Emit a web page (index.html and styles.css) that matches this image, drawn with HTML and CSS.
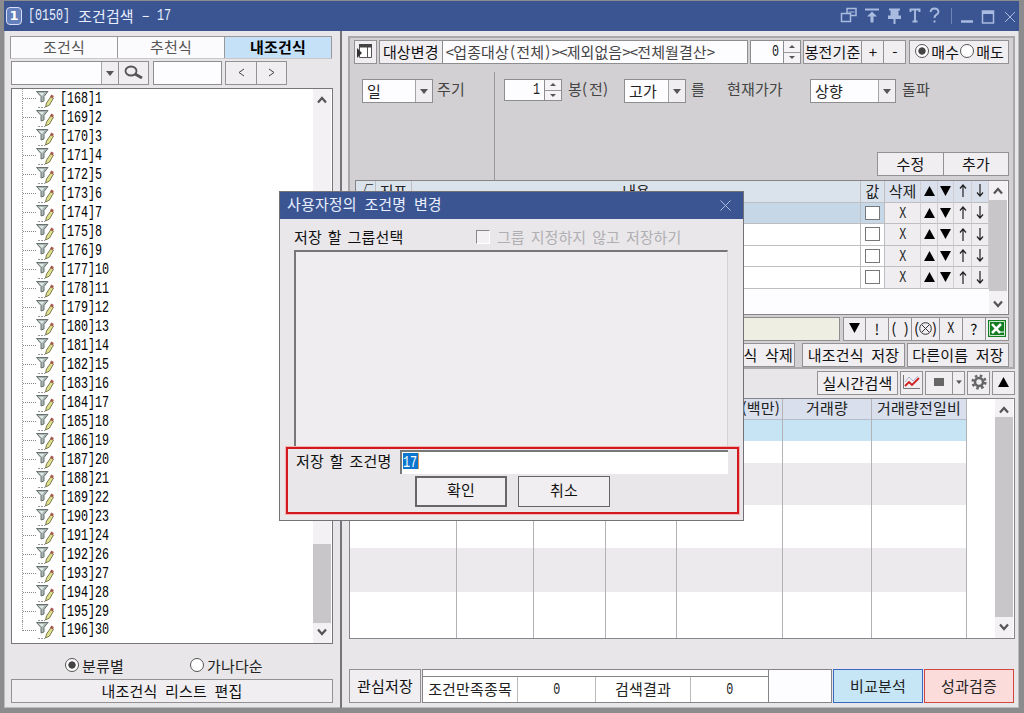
FILE: index.html
```html
<!DOCTYPE html>
<html lang="ko">
<head>
<meta charset="utf-8">
<title>[0150] 조건검색</title>
<link rel="stylesheet" href="styles.css">
</head>
<body>
<svg class="defs" width="0" height="0">
  <symbol id="filter" viewBox="0 0 18 18">
    <path d="M0.5 0.5H12L8 5.500V10L5 11V5.500Z" fill="#a9b7b5" stroke="#69706f"/>
    <path d="M3 2h5l-2 3z" fill="#dfeae7"/>
    <path d="M9.5 16l1-4 4.500-6.500 2.500 1.500-4 7z" fill="#e0df8c" stroke="#6d6d45" stroke-width=".9"/>
    <path d="M14 6l1.300-2.500 2.500 1.400-1.200 2.400z" fill="#a5584b"/>
    <path d="M2 16.500H9" stroke="#999" stroke-dasharray="2 1"/>
  </symbol>
  <symbol id="up" viewBox="0 0 10 10"><path d="M1 7.500L5 3l4 4.500" fill="none" stroke="#555" stroke-width="2.200"/></symbol>
  <symbol id="down" viewBox="0 0 10 10"><path d="M1 2.500L5 7l4-4.500" fill="none" stroke="#555" stroke-width="2.200"/></symbol>
  <symbol id="tri" viewBox="0 0 8 5"><path d="M0 0h8L4 5z" fill="#555"/></symbol>
  <symbol id="bup" viewBox="0 0 12 11"><path d="M6 0l6 11H0z" fill="#000"/></symbol>
  <symbol id="bdown" viewBox="0 0 12 11"><path d="M6 11L12 0H0z" fill="#000"/></symbol>
  <symbol id="aup" viewBox="0 0 8 13"><path d="M4 1v12M1 4.500L4 1l3 3.500" fill="none" stroke="#222" stroke-width="1.200"/></symbol>
  <symbol id="adown" viewBox="0 0 8 13"><path d="M4 0v12M1 8.500L4 12l3-3.500" fill="none" stroke="#222" stroke-width="1.200"/></symbol>
</svg>

<div class="window">
  <header class="titlebar">
    <span class="badge">1</span>
    <span class="title"><span class="n w6">[0150]</span> 조건검색 <span class="dash">-</span> <span class="n w2">17</span></span>
    <svg class="wtools" width="176" height="20" viewBox="0 0 176 20" fill="none" stroke="#a9bbdf" stroke-width="1.500">
      <path d="M7 2.500h9v7H7z"/><path d="M1.500 7.500h9v8h-9z" fill="#3a5592"/><path d="M8.500 6h6" stroke-width="1"/>
      <path d="M25 3.500h14" stroke-width="2"/><path d="M32 5.500l5 5h-3.500v6h-3v-6H27z" fill="#a9bbdf" stroke="none"/>
      <path d="M49 2.500h11v2h-1.500v5h2.500v3.500h-5.500v5h-2v-5H48V9.500h2.500v-5H49z" fill="#a9bbdf" stroke="none"/>
      <path d="M70.500 6V3.500h9V6M75 3.500v12M72.500 15.500h5" stroke-width="1.900"/>
      <path d="M90.500 6q.5-3.500 4-3.500t4 3.200q0 2-2.300 3.200-1.700 1-1.700 3M94.500 14.500v2" stroke-width="1.900"/>
      <path d="M111.500 2v16" stroke="#6f86b8" stroke-width="1"/>
      <path d="M121 15.500h12" stroke-width="2.500"/>
      <path d="M142.500 5h11v12h-11z"/><path d="M142 6.500h12" stroke-width="3"/>
      <path d="M165 6l10 10M175 6l-10 10" stroke-width="1"/>
    </svg>
  </header>

  <div class="body">
    <aside class="side">
      <nav class="tabs"><span>조건식</span><span>추천식</span><span class="on">내조건식</span></nav>
      <div class="find">
        <div class="combo c1"><span></span><i><svg width="8" height="5"><use href="#tri"/></svg></i></div>
        <div class="btn c2"><svg width="19" height="14" viewBox="0 0 19 14" fill="none" stroke="#555"><ellipse cx="7" cy="6" rx="5.500" ry="4.500" stroke-width="1.800"/><path d="M11 9l7 4" stroke-width="2.800"/></svg></div>
        <div class="box c3"></div>
        <div class="btn c4"><svg width="7" height="9"><path d="M6 1L1 4.500 6 8" fill="none" stroke="#444"/></svg></div>
        <div class="btn c5"><svg width="7" height="9"><path d="M1 1l5 3.500L1 8" fill="none" stroke="#444"/></svg></div>
      </div>
      <div class="tree">
        <div class="rows" id="rows"></div>
        <div class="scroll"><svg width="10" height="10"><use href="#up"/></svg><div class="thumb t1"></div><svg width="10" height="10"><use href="#down"/></svg></div>
      </div>
      <div class="sort"><span class="opt o1"><i class="radio sel"></i>분류별</span><span class="opt"><i class="radio"></i>가나다순</span></div>
      <div class="btn edit">내조건식 리스트 편집</div>
    </aside>

    <main class="main">
      <section class="panel">
        <div class="target">
          <div class="btn r1"><svg width="16" height="16" viewBox="0 0 16 16"><path d="M2.500 1.500h12v13h-12zM10.500 4v10" fill="#fff" stroke="#555"/><path d="M2 1h13v3.500H2z" fill="#444"/><path d="M0 5l5 5-5 5z" fill="#333"/></svg></div>
          <div class="btn r2">대상변경</div>
          <div class="box r3"><b>&lt;</b>업종대상<b>(</b>전체<b>)</b><b>&gt;</b><b>&lt;</b>제외없음<b>&gt;</b><b>&lt;</b>전체월결산<b>&gt;</b></div>
          <div class="box r4"><span class="n">0</span></div><div class="spin"><i><svg width="6" height="3"><path d="M0 3h6L3 0z"/></svg></i><i><svg width="6" height="3"><path d="M0 0h6L3 3z"/></svg></i></div>
          <div class="btn r5">봉전기준</div><div class="btn r6">+</div><div class="btn r6">-</div>
          <div class="btn r7"><i class="radio sel"></i>매수<i class="radio"></i>매도</div>
        </div>
        <div class="cond">
          <div class="period"><div class="combo p1"><span>일</span><i><svg width="8" height="5"><use href="#tri"/></svg></i></div><span class="lbl">주기</span></div>
          <div class="rule">
            <div class="line">
              <div class="box q1"><span class="n">1</span></div><div class="spin"><i><svg width="6" height="3"><path d="M0 3h6L3 0z"/></svg></i><i><svg width="6" height="3"><path d="M0 0h6L3 3z"/></svg></i></div>
              <span class="lbl q2">봉<b>(</b>전<b>)</b></span>
              <div class="combo q3"><span>고가</span><i><svg width="8" height="5"><use href="#tri"/></svg></i></div>
              <span class="lbl q4">를</span><span class="lbl q5">현재가가</span>
              <div class="combo q6"><span>상향</span><i><svg width="8" height="5"><use href="#tri"/></svg></i></div>
              <span class="lbl">돌파</span>
            </div>
            <div class="acts"><div class="btn">수정</div><div class="btn">추가</div></div>
          </div>
        </div>
        <div class="indic">
          <div class="grid">
            <div class="gr head"><span>√</span><span>지표</span><span>내용</span><span>값</span><span>삭제</span><span><svg width="11" height="10"><use href="#bup"/></svg></span><span><svg width="11" height="10"><use href="#bdown"/></svg></span><span><svg width="8" height="13"><use href="#aup"/></svg></span><span><svg width="8" height="13"><use href="#adown"/></svg></span></div>
          </div>
          <div class="scroll s2"><svg width="10" height="10"><use href="#up"/></svg><div class="thumb t2"></div><svg width="10" height="10"><use href="#down"/></svg></div>
        </div>
        <div class="formula">
          <div class="box f0"></div>
          <div class="btn f1"><svg width="11" height="10"><use href="#bdown"/></svg></div><div class="btn f2">!</div><div class="btn f2 par">(&nbsp;)</div><div class="btn f3 par">(<svg width="13" height="13" viewBox="0 0 13 13" fill="none" stroke="#333"><circle cx="6.500" cy="6.500" r="5.800"/><path d="M3 3l7 7M10 3l-7 7"/></svg>)</div><div class="btn f2"><span class="n">X</span></div><div class="btn f2">?</div>
          <div class="btn f2"><svg width="18" height="17" viewBox="0 0 18 17"><path d="M0 0h18v17H0z" fill="#137d22"/><path d="M1.500 1.500h15v14h-15z" fill="none" stroke="#cfe8cf"/><path d="M4 4l8 9M13 4l-9 9" stroke="#fff" stroke-width="2.500"/><path d="M12 12h4" stroke="#fff"/></svg></div>
        </div>
        <div class="saves"><div class="btn v1">내조건식 삭제</div><div class="btn v2">내조건식 저장</div><div class="btn v3">다른이름 저장</div></div>
      </section>

      <div class="live">
        <div class="btn l1">실시간검색</div>
        <div class="btn l2"><svg width="19" height="15" viewBox="0 0 19 15" fill="none"><path d="M1.500 0v13.500H18" stroke="#777"/><path d="M3 7l4-5 4 4 5-5" stroke="#aab6d0"/><path d="M3 11l4-4 3 3 7-7" stroke="#d02020" stroke-width="1.800"/></svg></div>
        <div class="btn l3"><u class="sq"></u></div><div class="btn l4"><svg width="6" height="4" viewBox="0 0 8 5"><use href="#tri"/></svg></div>
        <div class="btn l2 g2"><svg width="16" height="16" viewBox="0 0 16 16" fill="none" stroke="#666"><circle cx="8" cy="8" r="6.300" stroke-width="2.600" stroke-dasharray="2.500 2.450"/><circle cx="8" cy="8" r="4" stroke-width="2.600"/></svg></div>
        <div class="btn l2 g2"><svg width="11" height="10"><use href="#bup"/></svg></div>
      </div>

      <div class="result">
        <div class="cols">
          <div><span></span></div><div><span></span></div><div><span></span></div><div><span></span></div><div><span class="amt">거래대금(백만)</span></div><div><span>거래량</span></div><div><span>거래량전일비</span></div>
        </div>
        <div class="scroll s3"><svg width="10" height="10"><use href="#up"/></svg><div class="thumb t3"></div><svg width="10" height="10"><use href="#down"/></svg></div>
      </div>

      <footer class="foot">
        <div class="btn k1">관심저장</div>
        <div class="stat"><div class="strip"></div><div class="cells"><span>조건만족종목</span><span><b class="n">0</b></span><span>검색결과</span><span><b class="n">0</b></span></div></div>
        <div class="blank"></div>
        <div class="big blue">비교분석</div><div class="big red">성과검증</div>
      </footer>
    </main>
  </div>

  <div class="dialog">
    <div class="dtitle"><span>사용자정의 조건명 변경</span><svg width="11" height="11"><path d="M.5.5l10 10M10.500.5l-10 10" stroke="#a9bbdf"/></svg></div>
    <div class="dbody">
      <div class="drow"><span>저장 할 그룹선택</span><span class="nogrp"><i></i>그룹 지정하지 않고 저장하기</span></div>
      <div class="dlist"></div>
      <div class="named">
        <div class="nrow"><span>저장 할 조건명</span><div class="ninput"><mark><span class="n">17</span></mark></div></div>
        <div class="nbtns"><div class="btn ok">확인</div><div class="btn">취소</div></div>
      </div>
    </div>
  </div>
</div>
<script src="app.js"></script>
</body>
</html>
```
FILE: styles.css
```css
* { box-sizing: border-box; }
body { margin: 0; font: 15px/1 "Noto Sans CJK KR", sans-serif; letter-spacing: .15px; word-spacing: 3.3px; color: #222; }
i, b { font-style: normal; font-weight: 400; }
svg { display: block; flex: none; }
.defs { position: absolute; }
.window { position: relative; width: 1024px; height: 713px; background: #e8e6e9; border: solid #8c8b8e; border-width: 1px 5px 5px 4px; box-shadow: inset 1px 0 #bbb, inset -1px -1px #bbb; overflow: hidden; display: flex; flex-direction: column; }
.n { font: 16px/1 "Liberation Mono", monospace; letter-spacing: 0; word-spacing: 0; display: inline-block; transform: scaleX(.73); transform-origin: left; white-space: pre; }

.titlebar { height: 30px; flex: none; margin: 0 -4px; padding: 0 7px 0 6px; background: #3a5592; color: #e9efff; display: flex; align-items: center; }
.badge { width: 16px; height: 18px; border: 1px solid #d5def2; border-radius: 4px; background: #6580bb; color: #fff; font: bold 13px/16px "DejaVu Sans", sans-serif; text-align: center; letter-spacing: 0; }
.title { margin-left: 6px; padding-bottom: 2px; white-space: nowrap; display: flex; align-items: center; }
.title .n { padding-top: 2px; }
.w6 { width: 50px; } .w2 { width: 14px; margin-left: 9px; }
.dash { margin-left: 9px; transform: scaleX(1.6); }
.wtools { margin-left: auto; }

.body { flex: 1; display: flex; min-height: 0; }
.side { width: 338px; padding: 5px 8px 0 6px; border-right: 2px solid #77757a; flex: none; }
.tabs { display: flex; height: 23px; border: 1px solid #99989b; border-bottom-color: #c8c8ca; background: #fbfafc; }
.tabs span { flex: 1; display: flex; align-items: center; justify-content: center; border-right: 1px solid #99989b; color: #555; padding-bottom: 3px; }
.tabs .on { background: #c4e1f8; border: 0; font-weight: bold; color: #000; }
.box { background: #fdfcfe; border: 1px solid #8e8d90; display: flex; align-items: center; }
.btn { background: #f0eef1; border: 1px solid #929194; display: flex; align-items: center; justify-content: center; white-space: nowrap; color: #111; padding-bottom: 2px; }
.combo { display: flex; background: #fdfcfe; border: 1px solid #8e8d90; }
.combo span { flex: 1; padding: 3px 0 0 4px; white-space: nowrap; }
.combo i { width: 17px; background: #f0eef1; border-left: 1px solid #a5a4a7; display: flex; align-items: center; justify-content: center; }
.find { display: flex; height: 24px; margin: 2px 0 0 1px; }
.c1 { width: 108px; } .c2 { width: 31px; margin-left: -1px; } .c3 { width: 69px; margin: 0 3px 0 4px; } .c4 { width: 32px; } .c5 { width: 31px; margin-left: -1px; }
.tree { margin: 3px -1px 0 1px; height: 556px; background: #fff; border: 1px solid #77767a; display: flex; overflow: hidden; }
.rows { flex: 1; padding-left: 10px; }
.row { height: 19px; display: flex; align-items: center; border-left: 1px dotted #999; }
.row:last-child { height: 10px; }
.row:last-child > * { position: relative; top: 4px; }
.row u { width: 13px; border-top: 1px dotted #888; flex: none; }
.row svg { margin: 2px 6px 0 0; }
.row .n { width: 90px; color: #000; }
.scroll { width: 18px; margin-right: 1px; background: #f3f1f4; display: flex; flex-direction: column; align-items: center; padding: 6px 0; flex: none; }
.thumb { width: 100%; background: #c8c6c9; }
.t1 { height: 79px; margin: auto 0 4px; }
.sort { display: flex; height: 35px; padding: 7px 0 0 55px; align-items: center; }
.opt { display: flex; align-items: center; width: 125px; }
.radio { width: 14px; height: 14px; border: 1px solid #555; border-radius: 50%; background: #fff; margin-right: 3px; flex: none; }
.sel { background: radial-gradient(circle, #444 0 3.300px, #fff 4px); }
.edit { height: 24px; margin: 0 -1px 0 1px; }

.main { flex: 1; min-width: 0; padding: 5px 4px 0 6px; }
.panel { height: 333px; border: 2px solid #a9a8ab; background: #d2d0d2; padding: 2px 4px 0 4px; }
.target { display: flex; height: 24px; }
.r1 { width: 23px; margin-right: 2px; } .r2 { width: 64px; } .r3 { width: 307px; margin-left: -1px; padding: 0 0 2px 3px; color: #444; letter-spacing: .1px; white-space: nowrap; }
.r3 b { width: 7.500px; letter-spacing: 0; text-align: center; }
.r4 { width: 34px; margin-left: 2px; justify-content: flex-end; }
.r4 .n, .q1 .n { margin-right: 1px; }
.spin { width: 18px; margin-left: -1px; border: 1px solid #8e8d90; display: flex; flex-direction: column; background: #f5f3f6; }
.spin i { flex: 1; display: flex; align-items: center; justify-content: center; }
.spin i:first-child { border-bottom: 1px solid #999; }
.spin path { fill: #555; }
.r5 { width: 60px; margin-left: 2px; } .r6 { width: 23px; margin-left: -1px; } .r7 { width: 100px; margin-left: 3px; }
.r7 .radio { margin: 0 2px 0 1px; }
.cond { display: flex; height: 116px; }
.period { width: 141px; margin-top: 8px; padding: 7px 0 0 8px; display: flex; border-right: 1px solid #99989b; }
.combo { height: 24px; }
.p1 { width: 71px; }
.lbl { color: #444; padding-top: 2px; white-space: nowrap; }
.period .lbl { margin-left: 4px; }
.rule { flex: 1; display: flex; flex-direction: column; justify-content: space-between; padding: 15px 0 4px 9px; min-width: 0; }
.line { display: flex; }
.q1 { width: 41px; height: 22px; justify-content: flex-end; } .line .spin { height: 22px; }
.q2 { width: 61px; padding-left: 6px; margin-right: 1px; } .q2 b { display: inline-block; width: 7px; }
.q3 { width: 62px; } .q4 { width: 36px; margin-left: 5px; } .q5 { width: 83px; } .q6 { width: 86px; margin-right: 6px; }
.line > .lbl, .line > .combo, .line > .box, .line > .spin { flex: none; }
.acts { display: flex; justify-content: flex-end; }
.acts .btn { width: 66px; height: 24px; margin-left: -1px; } .acts .btn:first-child { width: 67px; }
.indic { height: 135px; background: #fdfcfe; border: 1px solid #858488; display: flex; margin-left: 1px; }
.grid { flex: 1; }
.gr { display: grid; grid-template-columns: 20px 36px 1fr 24px 36px 17px 16px 18px 17px; height: 21.500px; background: #fff; }
.gr > span { border-right: 1px solid #bebdc0; border-bottom: 1px solid #bebdc0; display: flex; align-items: center; justify-content: center; white-space: nowrap; overflow: hidden; letter-spacing: 0; }
.head > span { background: #dae2eb; padding-bottom: 1px; }
.gr > span:nth-child(n+5) { background: #efedf0; border-right-color: #d0ced2; }
.head > span:nth-child(n+5) { background: #dae1ed; }
.picked > span:nth-child(-n+4) { background: #c6d8e8; }
.check { width: 15px; height: 14px; border: 1px solid #777; background: #fff; }
.s2 { width: 18px; padding: 5px 0; } .t2 { height: 91px; margin: 4px 0 auto; }
.formula { display: flex; height: 24px; margin-top: 2px; }
.f0 { flex: 1; background: #eeefe2; margin: 0 3px 0 1px; } .f1 { width: 23px; } .f2 { width: 24px; margin-left: -1px; } .f3 { width: 29px; margin-left: -1px; }
.f2 .n { transform-origin: center; padding-top: 2px; }
.par { letter-spacing: 0; }
.saves { display: flex; justify-content: flex-end; height: 24px; margin-top: 2px; }
.v1 { width: 103px; margin-right: 7px; justify-content: flex-end; padding-right: 1px; } .v2 { width: 103px; margin-right: 2px; } .v3 { width: 102px; }

.live { display: flex; justify-content: flex-end; height: 24px; margin-top: 2px; }
.l1 { width: 81px; margin-right: 2px; } .l2 { width: 23px; } .l3 { width: 28px; margin-left: 2px; } .l4 { width: 13px; margin-left: -1px; } .g2 { margin-left: 2px; }
.sq { width: 10px; height: 8px; background: #666; }
.result { height: 241px; margin-top: 3px; background: #fff; border: 1px solid #858488; display: flex; justify-content: space-between; margin-left: 1px; }
.cols { width: 617px; display: grid; grid-template-columns: 107px 77px 72px 71px 106px 89px 95px; background: linear-gradient(#d9dfec 0 20px, #b5bdca 20px 21px, #c6e4f4 21px 42px, #fff 42px 64px, #eceaec 64px 106px, #fff 106px 149px, #eceaec 149px 193px, #fff 193px); }
.cols div { border-right: 1px solid #b3b2b5; }
.cols span { display: flex; height: 20px; padding-bottom: 3px; align-items: center; justify-content: center; white-space: nowrap; letter-spacing: .2px; }
.cols .amt { justify-content: flex-end; padding-right: 2px; }
.s3 { width: 18px; } .t3 { height: 200px; margin: auto 0 5px; }
.foot { display: flex; height: 34px; margin-top: 30px; margin-left: 1px; }
.k1 { width: 72px; margin-right: 1px; }
.stat { width: 347px; border: 1px solid #858488; background: #fff; display: flex; flex-direction: column; }
.strip { height: 7px; border-bottom: 1px solid #858488; }
.cells { flex: 1; display: grid; grid-template-columns: 95px 78px 95px 1fr; }
.cells span { display: flex; align-items: center; justify-content: center; border-right: 1px solid #bbb; padding-bottom: 2px; white-space: nowrap; }
.cells span:last-child { border: 0; }
.cells .n, .x { transform-origin: center; padding-top: 2px; }
.blank { width: 63px; border: 1px solid #858488; border-left: 0; background: #fdfcfe; }
.big { width: 90px; margin-left: 1px; display: flex; align-items: center; justify-content: center; border: 1px solid; padding-bottom: 2px; }
.blue { background: #c6e6f6; border-color: #3b68c0; } .red { background: #fcdcda; border-color: #d24840; }

.dialog { position: absolute; left: 275px; top: 190px; width: 465px; height: 330px; background: #e9e7ea; border: 1px solid #737277; display: flex; flex-direction: column; }
.dtitle { height: 27px; background: #3a5592; color: #e9efff; padding: 0 12px 0 7px; display: flex; align-items: center; justify-content: space-between; }
.dtitle span { padding-bottom: 4px; }
.dbody { padding: 0 5px; }
.drow { display: flex; height: 31px; padding: 4px 5px 0 9px; align-items: center; justify-content: space-between; color: #111; word-spacing: 1.500px; }
.nogrp { display: flex; align-items: center; color: #b0afb2; width: 257px; word-spacing: 2px; letter-spacing: 0; white-space: nowrap; }
.nogrp i { width: 14px; height: 14px; margin-right: 7px; border: 1px solid #888; border-color: #888 #fff #fff #888; background: #f3f1f4; }
.dlist { height: 197px; margin: 0 10px 0 9px; border: solid #d5d3d6; border-width: 2px 1px 0 2px; border-top-color: #77767a; border-left-color: #77767a; background: #efedf0; }
.named { height: 67px; border: 2px solid #d3191f; outline: 1px solid #f3b4b4; margin: 0 -1px 0 1px; }
.nrow { display: flex; padding: 1px 9px 0 8px; height: 25px; justify-content: space-between; align-items: center; color: #111; word-spacing: 1.500px; }
.nrow > span { padding-bottom: 3px; }
.ninput { width: 328px; height: 24px; background: #fff; border: solid #777; border-width: 2px 0 0 2px; padding: 1px; }
.ninput mark { display: block; background: #0b76d0; color: #fff; width: 16px; height: 16px; border-right: 1px solid #d79a50; }
.nbtns { display: flex; gap: 11px; padding: 2px 0 0 127px; }
.nbtns .btn { width: 92px; height: 31px; border-color: #666; padding-bottom: 4px; } .nbtns .ok { border-width: 2px; }
```
FILE: app.js
```js
const rows = document.getElementById('rows');
for (let id = 168; id <= 196; id++) {
  const name = id < 192 ? id - 167 : id - 166;
  rows.insertAdjacentHTML('beforeend',
    `<div class="row"><u></u><svg width="18" height="18"><use href="#filter"/></svg><span class="n">[${id}]${name}</span></div>`);
}
const grid = document.querySelector('.grid');
for (let r = 0; r < 4; r++) {
  grid.insertAdjacentHTML('beforeend',
    `<div class="gr ${r === 0 ? 'picked' : ''}"><span></span><span></span><span></span><span><i class="check"></i></span>` +
    '<span><b class="n x">X</b></span>' +
    '<span><svg width="11" height="10"><use href="#bup"/></svg></span><span><svg width="11" height="10"><use href="#bdown"/></svg></span>' +
    '<span><svg width="8" height="13"><use href="#aup"/></svg></span><span><svg width="8" height="13"><use href="#adown"/></svg></span></div>');
}
```
